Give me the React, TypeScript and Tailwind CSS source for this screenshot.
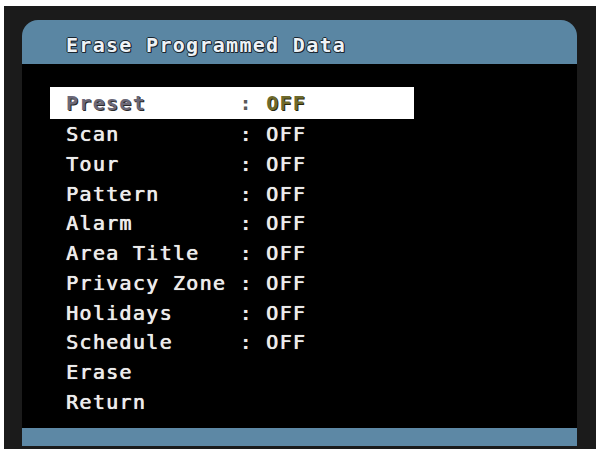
import React from "react";

const rows: [string, string | null][] = [
  ["Scan", "OFF"],
  ["Tour", "OFF"],
  ["Pattern", "OFF"],
  ["Alarm", "OFF"],
  ["Area Title", "OFF"],
  ["Privacy Zone", "OFF"],
  ["Holidays", "OFF"],
  ["Schedule", "OFF"],
  ["Erase", null],
  ["Return", null],
];

const pad = (s: string) => s + " ".repeat(Math.max(0, 13 - s.length));

export default function App() {
  return (
    <div className="w-[601px] h-[453px] bg-white overflow-hidden pt-[6px] pl-[4px]">
      <div className="w-[592px] h-[443px] bg-[#1b1b1b] pl-[18px] pr-[19px] pt-[14px] pb-[3px] flex flex-col">
        <div className="h-[44px] bg-[#5a86a3] rounded-t-[16px] pl-[44px] pt-[12px] shrink-0">
          <div
            className="whitespace-pre text-[20px] leading-[26px] tracking-[1.3px] font-bold text-[#eef2f6] [text-shadow:1px_1px_0_#1a2630,-1px_0_0_#1a2630,0_-1px_0_#1a2630,1px_0_0_#1a2630,0_1px_0_#1a2630]"
            style={{ fontFamily: '"DejaVu Sans Mono", monospace' }}
          >
            Erase Programmed Data
          </div>
        </div>
        <div
          className="flex-1 bg-black pt-[23px] pl-[28px] text-[20px] tracking-[1.3px] text-[#ececec]"
          style={{ fontFamily: '"DejaVu Sans Mono", monospace' }}
        >
          <div className="w-[364px] h-[32px] bg-white flex items-center pl-[16px] whitespace-pre font-bold">
            <span className="text-[#6b6878] [text-shadow:1px_1px_0_#2a2a2a]">{pad("Preset")}</span>
            <span className="text-[#5a5a5a]">: </span>
            <span className="text-[#6e6a2c] [text-shadow:1px_1px_0_#2a2a10]">OFF</span>
          </div>
          {rows.map(([label, val]) => (
            <div
              key={label}
              className="h-[29.8px] flex items-center pl-[16px] whitespace-pre [text-shadow:0.5px_0_0_#ececec,0_0_1px_#999]"
            >
              {val ? `${pad(label)}: ${val}` : label}
            </div>
          ))}
        </div>
        <div className="h-[18px] bg-[#5d88a5] shrink-0" />
      </div>
    </div>
  );
}
